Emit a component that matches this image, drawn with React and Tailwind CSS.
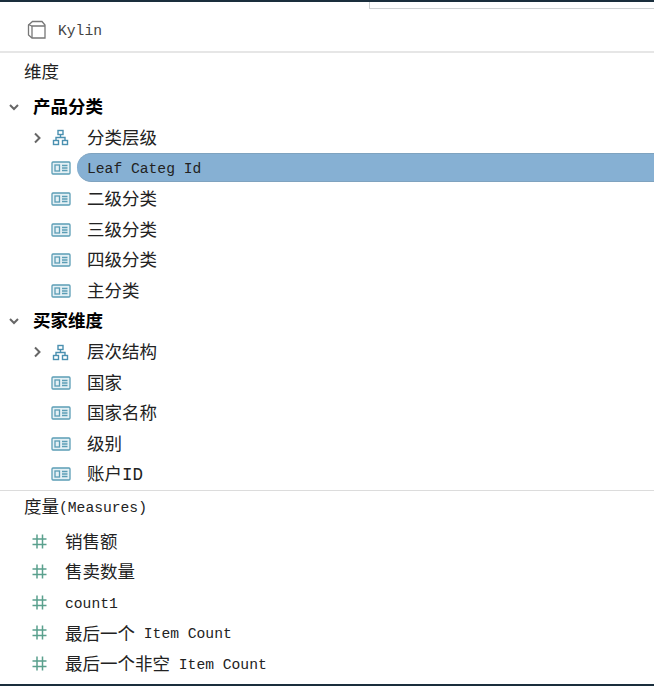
const FONT = "font-['Liberation_Mono','Noto_Sans_CJK_SC',monospace]";

function Cube() {
  return (
    <svg width="20" height="20" viewBox="0 0 20 20" fill="none" stroke="#777" strokeWidth="1.3">
      <path d="M5.5 1.5H15L18 5V18H5L1.5 15V5Z" />
      <path d="M1.5 4.5L5 6H18" />
      <path d="M5 6V18" />
    </svg>
  );
}
function Chevron({ down }) {
  return (
    <svg width="12" height="12" viewBox="0 0 12 12" fill="none" stroke="#666" strokeWidth="2" className="block">
      {down ? <path d="M2 4L6 8L10 4" /> : <path d="M4 1.5L8.5 6L4 10.5" />}
    </svg>
  );
}
function Hier() {
  return (
    <svg width="17" height="17" viewBox="0 0 17 17" fill="none" stroke="#4a90b0" strokeWidth="1.4" className="block">
      <rect x="6" y="1.5" width="5" height="4" />
      <rect x="1.5" y="11.5" width="5" height="4" />
      <rect x="10.5" y="11.5" width="5" height="4" />
      <path d="M8.5 5.5V8.5M4 11.5V8.5H13V11.5" />
    </svg>
  );
}
function Field() {
  return (
    <svg width="20" height="14" viewBox="0 0 20 14" fill="#e4f0f5" stroke="#5b9db5" strokeWidth="1.3" className="block">
      <rect x="1" y="1" width="18" height="12" rx="1" />
      <rect x="4" y="4" width="4.5" height="6" fill="none" />
      <path d="M11 4.5H16.5M11 7H16.5M11 9.5H16.5" fill="none" />
    </svg>
  );
}
function Hash() {
  return (
    <svg width="15" height="15" viewBox="0 0 15 15" fill="none" stroke="#5aa08d" strokeWidth="1.5" className="block">
      <path d="M5 0.5V14.5M10.5 0.5V14.5M0.5 5H14.5M0.5 10.5H14.5" />
    </svg>
  );
}

function GroupRow({ label }) {
  return (
    <div className="h-[30.6px] flex items-center">
      <span className="w-[33px] pl-[8px] mb-[2px]"><Chevron down /></span>
      <span className="text-[17.5px] font-bold text-black">{label}</span>
    </div>
  );
}
function HierRow({ label }) {
  return (
    <div className="h-[30.6px] flex items-center">
      <span className="w-[52px] pl-[31px] mb-[2px]"><Chevron /></span>
      <span className="w-[35px] mb-[2px]"><Hier /></span>
      <span className="text-[17.5px] text-[#222]">{label}</span>
    </div>
  );
}
function FieldRow({ label, selected, latin }) {
  return (
    <div className="h-[30.6px] flex items-center">
      <span className="w-[51px] shrink-0" />
      <span className="w-[26px] shrink-0 mb-[2px]"><Field /></span>
      <span
        className={
          "flex-1 h-[29px] flex items-center pl-[10px] rounded-l-[15px] text-[#222] mb-[4px] " +
          (selected ? "bg-[#86b0d3] border-y border-[#7fa3bf] " : "") +
          (latin ? "text-[14.67px]" : "text-[17.5px]")
        }
      >
        <span className="mt-[4px]">{label}</span>
      </span>
    </div>
  );
}
function MeasureRow({ cjk, latin }) {
  return (
    <div className="h-[30.6px] flex items-center">
      <span className="w-[65px] pl-[32px] mb-[2px]"><Hash /></span>
      <span className="flex items-center gap-[8.8px] text-[#222] mt-[2px]">
        {cjk && <span className="text-[17.5px]">{cjk}</span>}
        {latin && <span className="text-[14.67px] whitespace-pre mb-[1px]">{latin}</span>}
      </span>
    </div>
  );
}

export default function App() {
  return (
    <div className={"w-[654px] h-[686px] bg-white overflow-hidden flex flex-col relative " + FONT}>
      <div className="h-[2px] bg-[#1a2e3c] shrink-0" />
      <div className="absolute left-[369px] top-[2px] right-0 h-[7px] border-l border-b border-[#cfd2d4] bg-white" />
      <div className="h-[51px] shrink-0 border-b-2 border-[#e6e6e6] flex items-center pl-[27px] gap-[11px] pt-[6px]">
        <Cube />
        <span className="text-[14.67px] text-[#444] mt-[3px]">Kylin</span>
      </div>
      <div className="h-[40px] shrink-0 flex items-center pl-[24px] text-[17.5px] text-[#222]">维度</div>
      <GroupRow label="产品分类" />
      <HierRow label="分类层级" />
      <FieldRow label="Leaf Categ Id" selected latin />
      <FieldRow label="二级分类" />
      <FieldRow label="三级分类" />
      <FieldRow label="四级分类" />
      <FieldRow label="主分类" />
      <GroupRow label="买家维度" />
      <HierRow label="层次结构" />
      <FieldRow label="国家" />
      <FieldRow label="国家名称" />
      <FieldRow label="级别" />
      <FieldRow label="账户ID" />
      <div className="h-[1px] bg-[#dcdcdc] shrink-0 mt-[-1px]" />
      <div className="h-[36px] shrink-0 flex items-center pl-[24px] pb-[1px] text-[#222]">
        <span className="text-[17.5px]">度量</span>
        <span className="text-[14.67px] whitespace-pre">(Measures)</span>
      </div>
      <MeasureRow cjk="销售额" />
      <MeasureRow cjk="售卖数量" />
      <MeasureRow latin="count1" />
      <MeasureRow cjk="最后一个" latin="Item Count" />
      <MeasureRow cjk="最后一个非空" latin="Item Count" />
      <div className="absolute left-0 right-0 bottom-0 h-[2px] bg-[#1a2e3c]" />
    </div>
  );
}
